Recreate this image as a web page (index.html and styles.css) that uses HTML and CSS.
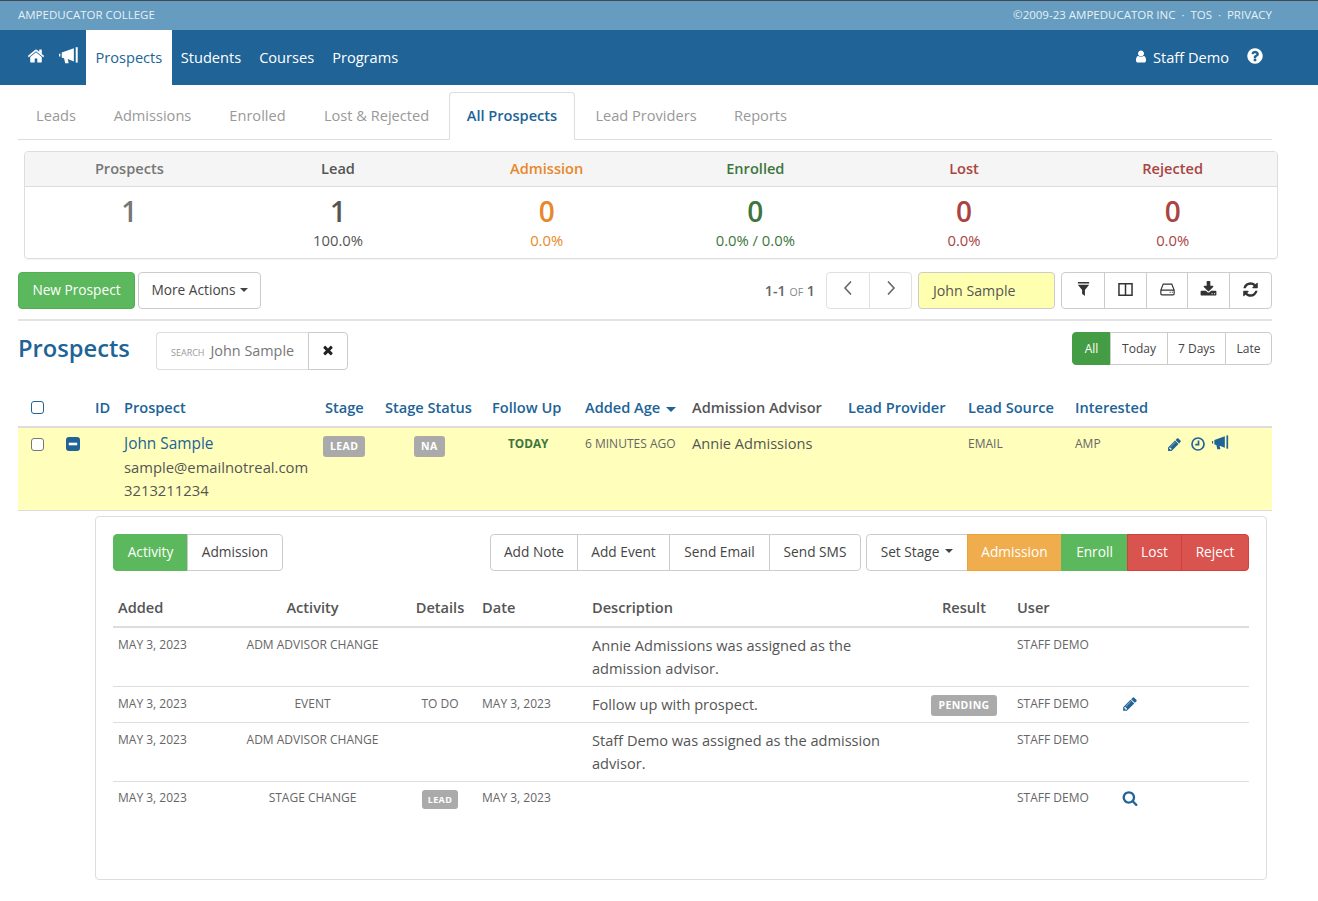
FILE: index.html
```html
<!DOCTYPE html>
<html lang="en">
<head>
<meta charset="utf-8">
<title>Prospects</title>
<link rel="stylesheet" href="styles.css">
</head>
<body>
<svg class="defs" width="0" height="0" aria-hidden="true">
  <symbol id="i-home" viewBox="0 0 1792 1792"><path d="M1472 992v480q0 26-19 45t-45 19h-384v-384h-256v384h-384q-26 0-45-19t-19-45v-480q0-1 .5-3t.5-3l575-474 575 474q1 2 1 6zm223-69l-62 74q-8 9-21 11h-3q-13 0-21-7l-692-577-692 577q-12 8-24 7-13-2-21-11l-62-74q-8-10-7-23.5t11-21.5l719-599q32-26 76-26t76 26l244 204v-195q0-14 9-23t23-9h192q14 0 23 9t9 23v408l219 182q10 8 11 21.5t-7 23.5z"/></symbol>
  <symbol id="i-horn" viewBox="0 0 20 16"><path d="M0 6h1.200v2.400H0zM2.500 4.800 L13.500 1 V13 L8 10.800 L8.800 14.500 H5.600 L4.600 10 L2.500 9.600z"/><path d="M15.200 0h1.800v14h-1.800z"/></symbol>
  <symbol id="i-pencil" viewBox="0 0 1792 1792"><path d="M491 1536l91-91-235-235-91 91v107h128v128h107zm523-928q0-22-22-22-10 0-17 7l-542 542q-7 7-7 17 0 22 22 22 10 0 17-7l542-542q7-7 7-17zm-54-192l416 416-832 832h-416v-416zm683 96q0 53-37 90l-166 166-416-416 166-165q36-38 90-38 53 0 91 38l235 234q37 39 37 91z"/></symbol>
  <symbol id="i-user" viewBox="0 0 1792 1792"><path d="M1536 1399q0 109-62.500 187t-150.500 78h-854q-88 0-150.500-78t-62.500-187q0-85 8.500-160.500t31.500-152 58.500-131 94-89 134.500-34.500q131 128 313 128t313-128q76 0 134.500 34.500t94 89 58.500 131 31.500 152 8.500 160.500zm-256-887q0 159-112.500 271.500t-271.500 112.500-271.500-112.500-112.500-271.500 112.500-271.500 271.500-112.500 271.500 112.500 112.500 271.500z"/></symbol>
  <symbol id="i-help" viewBox="0 0 1792 1792"><path d="M1024 1376v-192q0-14-9-23t-23-9h-192q-14 0-23 9t-9 23v192q0 14 9 23t23 9h192q14 0 23-9t9-23zm256-672q0-88-55.500-163t-138.500-116-170-41q-243 0-371 213-15 24 8 42l132 100q7 6 19 6 16 0 25-12 53-68 86-92 34-24 86-24 48 0 85.500 26t37.500 59q0 38-20 61t-68 45q-63 28-115.500 86.500t-52.500 125.500v36q0 14 9 23t23 9h192q14 0 23-9t9-23q0-19 21.500-49.500t54.500-49.500q32-18 49-28.500t46-35 44.500-48 28-60.500 12.500-81zm384 192q0 209-103 385.500t-279.500 279.500-385.500 103-385.500-103-279.500-279.500-103-385.500 103-385.500 279.500-279.500 385.500-103 385.500 103 279.500 279.500 103 385.500z"/></symbol>
  <symbol id="i-search" viewBox="0 0 1792 1792"><path d="M1216 832q0-185-131.500-316.500t-316.500-131.500-316.500 131.500-131.500 316.500 131.500 316.500 316.500 131.500 316.500-131.500 131.500-316.500zm512 832q0 52-38 90t-90 38q-54 0-90-38l-343-342q-179 124-399 124-143 0-273.500-55.500t-225-150-150-225-55.500-273.500 55.500-273.500 150-225 225-150 273.500-55.500 273.500 55.500 225 150 150 225 55.500 273.500q0 220-124 399l343 343q37 37 37 90z"/></symbol>
  <symbol id="i-times" viewBox="0 0 1792 1792"><path d="M1490 1322q0 40-28 68l-136 136q-28 28-68 28t-68-28l-294-294-294 294q-28 28-68 28t-68-28l-136-136q-28-28-28-68t28-68l294-294-294-294q-28-28-28-68t28-68l136-136q28-28 68-28t68 28l294 294 294-294q28-28 68-28t68 28l136 136q28 28 28 68t-28 68l-294 294 294 294q28 28 28 68z"/></symbol>
  <symbol id="i-download" viewBox="0 0 1792 1792"><path d="M1344 1344q0-26-19-45t-45-19-45 19-19 45 19 45 45 19 45-19 19-45zm256 0q0-26-19-45t-45-19-45 19-19 45 19 45 45 19 45-19 19-45zm128-224v320q0 40-28 68t-68 28h-1472q-40 0-68-28t-28-68v-320q0-40 28-68t68-28h465l135 136q58 56 136 56t136-56l136-136h464q40 0 68 28t28 68zm-325-569q17 41-14 70l-448 448q-18 19-45 19t-45-19l-448-448q-31-29-14-70 17-39 59-39h256v-448q0-26 19-45t45-19h256q26 0 45 19t19 45v448h256q42 0 59 39z"/></symbol>
  <symbol id="i-refresh" viewBox="0 0 1792 1792"><path d="M1639 1056q0 5-1 7-64 268-268 434.500t-478 166.500q-146 0-282.500-55t-243.500-157l-129 129q-19 19-45 19t-45-19-19-45v-448q0-26 19-45t45-19h448q26 0 45 19t19 45-19 45l-137 137q71 66 161 102t187 36q134 0 250-65t186-179q11-17 53-117 8-23 30-23h192q13 0 22.500 9.500t9.500 22.500zm25-800v448q0 26-19 45t-45 19h-448q-26 0-45-19t-19-45 19-45l138-138q-148-137-349-137-134 0-250 65t-186 179q-11 17-53 117-8 23-30 23h-199q-13 0-22.500-9.500t-9.500-22.500v-7q65-268 270-434.500t480-166.500q146 0 284 55.500t245 156.500l130-129q19-19 45-19t45 19 19 45z"/></symbol>
  <symbol id="i-filter" viewBox="0 0 14 16"><path d="M1 0h12v1.600H1zM1 3h12L8.500 8.500V15L5.500 12.500V8.500z"/></symbol>
  <symbol id="i-columns" viewBox="0 0 14 14"><path fill="none" stroke="currentColor" stroke-width="1.400" d="M.9 1.700h12.200v10.600H.9zM7 1.700v10.600"/></symbol>
  <symbol id="i-hdd" viewBox="0 0 14 12"><path fill="none" stroke="currentColor" stroke-width="1.100" d="M3 1h8l2.200 5.500V10a1 1 0 0 1-1 1H1.800a1 1 0 0 1-1-1V6.500zM.8 6.500h12.400"/><path d="M9 8h1v1H9zM11 8h1v1h-1z"/></symbol>
  <symbol id="i-clock" viewBox="0 0 14 14"><path fill="none" stroke="currentColor" stroke-width="1.700" d="M7 1a6 6 0 1 0 0 12A6 6 0 0 0 7 1zM7.500 3.500V7.700H4.300"/></symbol>
  <symbol id="i-minus" viewBox="0 0 14 14"><rect width="14" height="14" rx="3"/><path fill="#fff" d="M2.800 5.700h8.400v2.600H2.800z"/></symbol>
  <symbol id="i-prev" viewBox="0 0 10 16"><path fill="none" stroke="currentColor" stroke-width="1.600" d="M8 1.500 2 8l6 6.500"/></symbol>
  <symbol id="i-next" viewBox="0 0 10 16"><path fill="none" stroke="currentColor" stroke-width="1.600" d="M2 1.500 8 8l-6 6.500"/></symbol>
</svg>

<div class="topbar">
  <span>AMPEDUCATOR COLLEGE</span>
  <span>©2009-23 AMPEDUCATOR INC &nbsp;·&nbsp; TOS &nbsp;·&nbsp; PRIVACY</span>
</div>

<nav class="mainnav">
  <a class="nav-icon nav-home"><svg class="ic18"><use href="#i-home"/></svg></a>
  <a class="nav-icon nav-horn"><svg class="ic-horn"><use href="#i-horn"/></svg></a>
  <a class="nav-link active">Prospects</a>
  <a class="nav-link">Students</a>
  <a class="nav-link">Courses</a>
  <a class="nav-link">Programs</a>
  <span class="nav-user"><svg class="ic-user"><use href="#i-user"/></svg>Staff Demo</span>
  <a class="nav-help"><svg class="ic18"><use href="#i-help"/></svg></a>
</nav>

<main class="page">
  <ul class="tabs">
    <li>Leads</li>
    <li>Admissions</li>
    <li>Enrolled</li>
    <li>Lost &amp; Rejected</li>
    <li class="active">All Prospects</li>
    <li>Lead Providers</li>
    <li>Reports</li>
  </ul>

  <section class="stats">
    <div class="stats-head">
      <div class="c-muted">Prospects</div>
      <div class="c-dark">Lead</div>
      <div class="c-orange">Admission</div>
      <div class="c-green">Enrolled</div>
      <div class="c-red">Lost</div>
      <div class="c-red">Rejected</div>
    </div>
    <div class="stats-body">
      <div class="c-muted"><b>1</b></div>
      <div class="c-dark"><b>1</b><span>100.0%</span></div>
      <div class="c-orange"><b>0</b><span>0.0%</span></div>
      <div class="c-green"><b>0</b><span>0.0% / 0.0%</span></div>
      <div class="c-red"><b>0</b><span>0.0%</span></div>
      <div class="c-red"><b>0</b><span>0.0%</span></div>
    </div>
  </section>

  <div class="toolbar">
    <button class="btn btn-new">New Prospect</button>
    <button class="btn btn-more">More Actions <i class="caret"></i></button>
    <div class="pager"><b>1-1</b> <small>OF</small> <b>1</b></div>
    <div class="group pager-btns">
      <button class="btn pale"><svg class="ic-chev"><use href="#i-prev"/></svg></button>
      <button class="btn pale"><svg class="ic-chev"><use href="#i-next"/></svg></button>
    </div>
    <div class="name-box">John Sample</div>
    <div class="group tools">
      <button class="btn"><svg class="ic-tool"><use href="#i-filter"/></svg></button>
      <button class="btn"><svg class="ic-tool"><use href="#i-columns"/></svg></button>
      <button class="btn"><svg class="ic-tool"><use href="#i-hdd"/></svg></button>
      <button class="btn"><svg class="ic-tool ic-big"><use href="#i-download"/></svg></button>
      <button class="btn"><svg class="ic-tool ic-big"><use href="#i-refresh"/></svg></button>
    </div>
  </div>

  <div class="title-row">
    <h1>Prospects</h1>
    <div class="group search">
      <div class="search-box"><small>SEARCH</small>John Sample</div>
      <button class="btn"><svg class="ic-x"><use href="#i-times"/></svg></button>
    </div>
    <div class="group ranges">
      <button class="btn on">All</button>
      <button class="btn">Today</button>
      <button class="btn">7 Days</button>
      <button class="btn">Late</button>
    </div>
  </div>

  <table class="prospects">
    <colgroup>
      <col class="p1"><col class="p2"><col class="p3"><col class="p4"><col class="p5"><col class="p6"><col class="p7"><col class="p8"><col class="p9"><col class="p10"><col class="p11"><col class="p12"><col class="p13">
    </colgroup>
    <thead>
      <tr>
        <th><span class="check head"></span></th>
        <th></th>
        <th>ID</th>
        <th>Prospect</th>
        <th>Stage</th>
        <th>Stage Status</th>
        <th>Follow Up</th>
        <th>Added Age <i class="caret"></i></th>
        <th class="dark">Admission Advisor</th>
        <th>Lead Provider</th>
        <th>Lead Source</th>
        <th>Interested</th>
        <th></th>
      </tr>
    </thead>
    <tbody>
      <tr>
        <td><span class="check"></span></td>
        <td><svg class="ic-minus"><use href="#i-minus"/></svg></td>
        <td></td>
        <td class="contact"><a>John Sample</a><br>sample@emailnotreal.com<br>3213211234</td>
        <td><span class="label">LEAD</span></td>
        <td class="status"><span class="label">NA</span></td>
        <td class="today">TODAY</td>
        <td class="caps">6 MINUTES AGO</td>
        <td class="advisor">Annie Admissions</td>
        <td></td>
        <td class="caps">EMAIL</td>
        <td class="caps">AMP</td>
        <td class="row-actions"><svg class="ic-p"><use href="#i-pencil"/></svg><svg class="ic-c"><use href="#i-clock"/></svg><svg class="ic-h"><use href="#i-horn"/></svg></td>
      </tr>
    </tbody>
  </table>

  <section class="detail">
    <div class="detail-bar">
      <div class="group subtabs">
        <button class="btn ok">Activity</button>
        <button class="btn">Admission</button>
      </div>
      <div class="group acts">
        <button class="btn">Add Note</button>
        <button class="btn">Add Event</button>
        <button class="btn">Send Email</button>
        <button class="btn">Send SMS</button>
      </div>
      <div class="group stages">
        <button class="btn">Set Stage <i class="caret"></i></button>
        <button class="btn warn">Admission</button>
        <button class="btn ok">Enroll</button>
        <button class="btn bad">Lost</button>
        <button class="btn bad">Reject</button>
      </div>
    </div>

    <table class="activity">
      <colgroup>
        <col class="a1"><col class="a2"><col class="a3"><col class="a4"><col class="a5"><col class="a6"><col class="a7"><col class="a8">
      </colgroup>
      <thead>
        <tr>
          <th>Added</th><th class="mid">Activity</th><th class="mid">Details</th><th>Date</th><th>Description</th><th class="mid">Result</th><th>User</th><th></th>
        </tr>
      </thead>
      <tbody>
        <tr class="tall">
          <td class="caps">MAY 3, 2023</td><td class="caps mid">ADM ADVISOR CHANGE</td><td></td><td></td>
          <td class="desc">Annie Admissions was assigned as the admission advisor.</td><td></td><td class="caps">STAFF DEMO</td><td></td>
        </tr>
        <tr>
          <td class="caps">MAY 3, 2023</td><td class="caps mid">EVENT</td><td class="caps mid">TO DO</td><td class="caps">MAY 3, 2023</td>
          <td class="desc">Follow up with prospect.</td><td class="mid"><span class="label">PENDING</span></td><td class="caps">STAFF DEMO</td><td><svg class="ic-link"><use href="#i-pencil"/></svg></td>
        </tr>
        <tr class="tall">
          <td class="caps">MAY 3, 2023</td><td class="caps mid">ADM ADVISOR CHANGE</td><td></td><td></td>
          <td class="desc">Staff Demo was assigned as the admission advisor.</td><td></td><td class="caps">STAFF DEMO</td><td></td>
        </tr>
        <tr>
          <td class="caps">MAY 3, 2023</td><td class="caps mid">STAGE CHANGE</td><td class="mid"><span class="label small">LEAD</span></td><td class="caps">MAY 3, 2023</td>
          <td></td><td></td><td class="caps">STAFF DEMO</td><td><svg class="ic-link"><use href="#i-search"/></svg></td>
        </tr>
      </tbody>
    </table>
  </section>
</main>
</body>
</html>
```

FILE: styles.css
```css
* { box-sizing: border-box; }
html, body { margin: 0; padding: 0; }
body {
  font-family: "Open Sans", "Noto Sans", sans-serif;
  font-size: 14.6px;
  color: #555;
  background: #fff;
  overflow-x: hidden;
}
.defs { position: absolute; }
svg { fill: currentColor; display: block; }
button { font: inherit; color: inherit; cursor: pointer; }

/* top strip */
.topbar {
  height: 30px;
  border-top: 1px solid #3f4a52;
  background: #659cbf;
  color: #e8f0f6;
  font-size: 11.5px;
  display: flex;
  justify-content: space-between;
  align-items: center;
  padding: 0 46px 2px 18px;
}

/* main nav */
.mainnav {
  height: 55px;
  background: #206397;
  color: #fff;
  display: flex;
  align-items: stretch;
}
.nav-icon, .nav-help { display: flex; align-items: center; }
.nav-home { padding: 0 0 3px 27px; }
.nav-horn { padding: 0 5px 3px 14px; }
.ic18 { width: 18px; height: 18px; }
.ic-horn { width: 22px; height: 18px; }
.nav-link { display: flex; align-items: center; padding: 0 9px 2px; }
.nav-link.active { background: #fff; color: #206397; padding: 0 9.5px 2px; }
.nav-user { margin-left: auto; display: flex; align-items: center; padding-bottom: 2px; }
.ic-user { width: 14px; height: 15px; margin-right: 5px; }
.nav-help { padding: 0 54px 3px 17px; }

/* page */
.page { padding: 0 46px 0 18px; }

.tabs {
  list-style: none;
  margin: 0;
  padding: 7px 0 0;
  height: 55px;
  display: grid;
  grid-template-columns: 76px 117px 93px 145px 126px 142px 87px;
  justify-content: start;
  border-bottom: 1px solid #ddd;
  color: #999;
}
.tabs li { display: flex; align-items: center; justify-content: center; height: 48px; padding-bottom: 2px; }
.tabs .active {
  color: #206397;
  font-weight: 600;
  background: #fff;
  border: 1px solid #ddd;
  border-bottom-color: #fff;
  border-radius: 4px 4px 0 0;
}

/* stats */
.stats {
  margin: 11px -6px 0 6px;
  height: 108px;
  border: 1px solid #ddd;
  border-radius: 4px;
  overflow: hidden;
  box-shadow: 0 1px 1px rgba(0,0,0,.05);
}
.stats-head, .stats-body { display: grid; grid-template-columns: repeat(6, 1fr); text-align: center; }
.stats-head {
  height: 35px;
  padding-bottom: 2px;
  align-items: center;
  background: #f5f5f5;
  border-bottom: 1px solid #ddd;
  font-weight: 600;
}
.stats-body b { display: block; font-size: 28px; line-height: 36px; margin-top: 6px; font-weight: 600; }
.stats-body span { display: block; font-size: 14.8px; line-height: 22px; }
.c-muted { color: #777; }
.c-dark { color: #555; }
.c-orange { color: #e8872b; }
.c-green { color: #3c763d; }
.c-red { color: #a94442; }

/* buttons */
.btn {
  height: 37px;
  padding: 0 0 2px;
  background: #fff;
  border: 1px solid #ccc;
  border-radius: 4px;
  color: #444;
  font-size: 13.7px;
  display: flex;
  align-items: center;
  justify-content: center;
}
.group { display: grid; grid-auto-flow: column; }
.group .btn { border-radius: 0; margin-left: -1px; }
.group .btn:first-child { border-radius: 4px 0 0 4px; margin-left: 0; }
.group .btn:last-child { border-radius: 0 4px 4px 0; }
.caret {
  display: inline-block;
  width: 0; height: 0;
  margin-left: 4px;
  vertical-align: middle;
  border-top: 4px solid currentColor;
  border-left: 4px solid transparent;
  border-right: 4px solid transparent;
}

/* toolbar */
.toolbar {
  margin-top: 13px;
  height: 49px;
  padding-bottom: 11px;
  display: flex;
  align-items: flex-start;
  border-bottom: 2px solid #e3e3e3;
}
.btn-new { width: 117px; background: #5cb85c; border-color: #52b052; color: #fff; }
.btn-more { width: 123px; margin-left: 3px; }
.pager { margin-left: auto; line-height: 37px; color: #666; font-size: 14.3px; }
.pager b { font-weight: 600; }
.pager small { font-size: 10.500px; color: #888; }
.pager-btns { margin-left: 11px; grid-template-columns: 44px 42px; }
.pale { border-color: #e0e0e0; color: #666; }
.ic-chev { width: 10px; height: 16px; margin-top: -3px; }
.name-box {
  margin-left: 6px;
  width: 137px;
  height: 37px;
  padding-left: 14px;
  line-height: 35px;
  background: #ffffb0;
  border: 1px solid #ccc;
  border-radius: 4px;
  font-size: 14.2px;
}
.tools { margin-left: 6px; grid-template-columns: 44px 42px 41px 42px 42px; }
.tools .btn { color: #333; }
.ic-tool { width: 15px; height: 15px; margin-top: -1px; }
.ic-big { width: 17px; height: 17px; }

/* title row */
.title-row { margin-top: 11px; height: 58px; display: flex; align-items: flex-start; }
h1 { margin: 0; width: 111px; font-size: 23.700px; line-height: 33px; font-weight: 600; color: #206397; white-space: nowrap; }
.search { margin-left: 27px; grid-template-columns: 153px 39px; }
.search .btn { height: 38px; }
.search-box {
  height: 38px;
  padding-left: 14px;
  line-height: 36px;
  border: 1px solid #ddd;
  border-right: 0;
  border-radius: 4px 0 0 4px;
  color: #777;
  font-size: 14.4px;
  white-space: nowrap;
}
.search-box small { font-size: 9px; color: #999; margin-right: 6px; }
.ic-x { width: 14px; height: 14px; color: #222; }
.ranges { margin-left: auto; grid-template-columns: 39px 57px 58px 46px; }
.ranges .btn { height: 33px; padding: 0; font-size: 12px; }
.ranges .on { background: #449d44; border-color: #449d44; color: #fff; }

/* prospects table */
table { border-collapse: collapse; table-layout: fixed; width: 100%; }
th { text-align: left; font-weight: 600; }
.prospects th, .prospects td { padding: 0 0 0 5px; }
.p1 { width: 42px; } .p2 { width: 30px; } .p3 { width: 29px; } .p4 { width: 201px; }
.p5 { width: 60px; } .p6 { width: 107px; } .p7 { width: 93px; } .p8 { width: 107px; }
.p9 { width: 156px; } .p10 { width: 120px; } .p11 { width: 107px; } .p12 { width: 90px; } .p13 { width: 112px; }
.prospects thead tr { height: 37px; border-bottom: 2px solid #ddd; }
.prospects th { color: #206397; white-space: nowrap; padding-bottom: 2px; }
.prospects th.dark { color: #555; }
.prospects th .caret {
  margin-left: 2px;
  border-top-width: 5px;
  border-left-width: 5.5px;
  border-right-width: 5.5px;
}
.prospects tbody tr { height: 83px; background: #ffffbb; border-bottom: 1px solid #ddd; }
.prospects td { vertical-align: top; padding-top: 6px; }
.check {
  display: block;
  width: 13px; height: 13px;
  margin: 4px 0 0 8px;
  background: #fff;
  border: 1px solid #777;
  border-radius: 3px;
}
.check.head { border-color: #206397; margin-top: 0; }
.ic-minus { width: 14px; height: 14px; margin: 3px 0 0 1px; color: #206397; }
.prospects td.contact { padding-top: 4px; line-height: 23.500px; font-size: 14.8px; white-space: nowrap; }
.contact a { color: #206397; font-size: 15.4px; }
.label {
  display: inline-block;
  padding: 0 7px;
  line-height: 21px;
  background: #aaa;
  border-radius: 3px;
  color: #fff;
  font-size: 10.500px;
  font-weight: 700;
  letter-spacing: .4px;
}
.label.small { padding: 0 6px; font-size: 9px; line-height: 19px; }
.prospects td .label { margin-top: 2px; margin-left: -2px; }
.prospects td.status { padding-left: 36px; }
.prospects td.today { font-size: 11.800px; font-weight: 700; color: #3c763d; padding-top: 5px; padding-left: 21px; line-height: 20px; }
.caps { font-size: 12px; color: #666; white-space: nowrap; line-height: 20px; }
.prospects td.caps { padding-top: 6px; }
.prospects td.advisor { padding-top: 3px; line-height: 24px; white-space: nowrap; }
.row-actions { white-space: nowrap; }
.row-actions svg { display: inline-block; color: #206397; vertical-align: top; }
.ic-p { width: 15px; height: 15px; margin: 3px 0 0 2px; }
.ic-c { width: 14px; height: 14px; margin: 3px 0 0 9px; }
.ic-h { width: 19px; height: 16px; margin: 1px 0 0 7px; }

/* detail panel */
.detail {
  margin: 5px 5px 0 77px;
  height: 364px;
  padding: 17px 17px 0;
  border: 1px solid #ddd;
  border-radius: 4px;
}
.detail-bar { display: flex; align-items: flex-start; }
.subtabs { grid-template-columns: 75px 95px; }
.acts { margin-left: auto; grid-template-columns: 88px 92px 100px 91px; }
.stages { margin-left: 5px; grid-template-columns: 102px 94px 66px 54px 67px; }
.ok { background: #5cb85c; border-color: #5cb85c; color: #fff; }
.warn { background: #f0ad4e; border-color: #eea236; color: #fff; }
.bad { background: #d9534f; border-color: #d43f3a; color: #fff; }
.stages .caret { margin-left: 6px; }

.activity { margin-top: 19px; }
.a1 { width: 98px; } .a2 { width: 203px; } .a3 { width: 52px; } .a4 { width: 121px; }
.a5 { width: 329px; } .a6 { width: 96px; } .a7 { width: 105px; } .a8 { width: 132px; }
.activity th, .activity td { padding: 0 5px; }
.activity th:nth-child(3), .activity td:nth-child(3) { padding-left: 0; padding-right: 0; }
.activity th:nth-child(4), .activity td:nth-child(4) { padding-left: 16px; }
.activity thead tr { height: 37px; border-bottom: 2px solid #ddd; }
.activity th { color: #555; padding-bottom: 1px; }
.activity tbody tr { height: 36px; border-bottom: 1px solid #ddd; }
.activity tbody tr.tall { height: 60px; }
.activity tbody tr.tall:nth-child(3) { height: 59px; }
.activity tbody tr:last-child { border-bottom: 0; }
.activity td { vertical-align: top; padding-top: 6px; }
.activity td.caps { padding-top: 7px; }
.activity tr:last-child td { padding-top: 5px; }
.activity tr:last-child td.caps { padding-top: 6px; }
.mid { text-align: center !important; }
.desc { line-height: 23px; }
.activity .label { margin-top: 2px; }
.ic-link { width: 16px; height: 16px; color: #206397; margin-top: 3px; }
```
